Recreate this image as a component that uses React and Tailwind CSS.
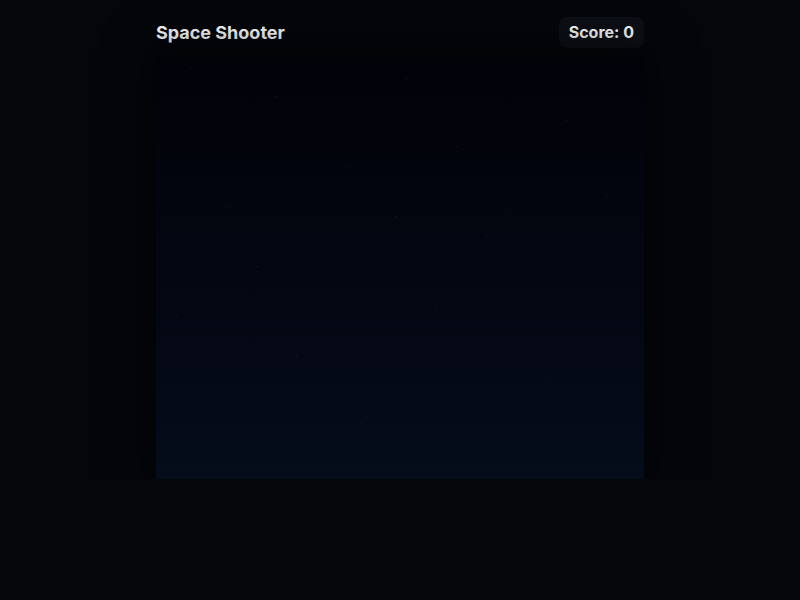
import React from "react";

const stars = [
  [34, 12], [120, 40], [250, 22], [410, 64], [70, 150], [190, 110], [330, 180],
  [450, 140], [20, 260], [140, 300], [280, 250], [390, 320], [470, 380], [60, 390],
  [210, 360], [350, 402], [100, 210], [300, 90], [430, 240], [240, 160],
];

const App = () => {
  return (
    <div
      className="min-h-screen w-full bg-[#04060a] flex justify-center"
      style={{ fontFamily: "Inter, 'Noto Sans', sans-serif" }}
    >
      {/* wide wrapper clips the canvas glow at its bottom edge */}
      <div className="w-[648px] px-20 pt-4 flex flex-col self-start overflow-hidden">
        {/* Header */}
        <div className="flex items-center justify-between mb-2 h-[32px]">
          <h1 className="text-lg font-bold text-[#f8fafc] pt-0.5">Space Shooter</h1>
          <div className="rounded-lg bg-[#0c0f15] px-2.5 h-[31px] flex items-center text-base font-bold text-[#f8fafc]">
            Score: 0
          </div>
        </div>

        {/* Game canvas */}
        <div className="relative h-[423px] w-full bg-gradient-to-b from-[#020309] to-[#050c1a] shadow-[0_0_40px_8px_rgba(0,0,0,0.55)] overflow-hidden">
          {stars.map(([x, y], i) => (
            <span
              key={i}
              className="absolute w-px h-px bg-[#141b29]"
              style={{ left: x, top: y }}
            />
          ))}
        </div>
      </div>
    </div>
  );
};

export default App;
